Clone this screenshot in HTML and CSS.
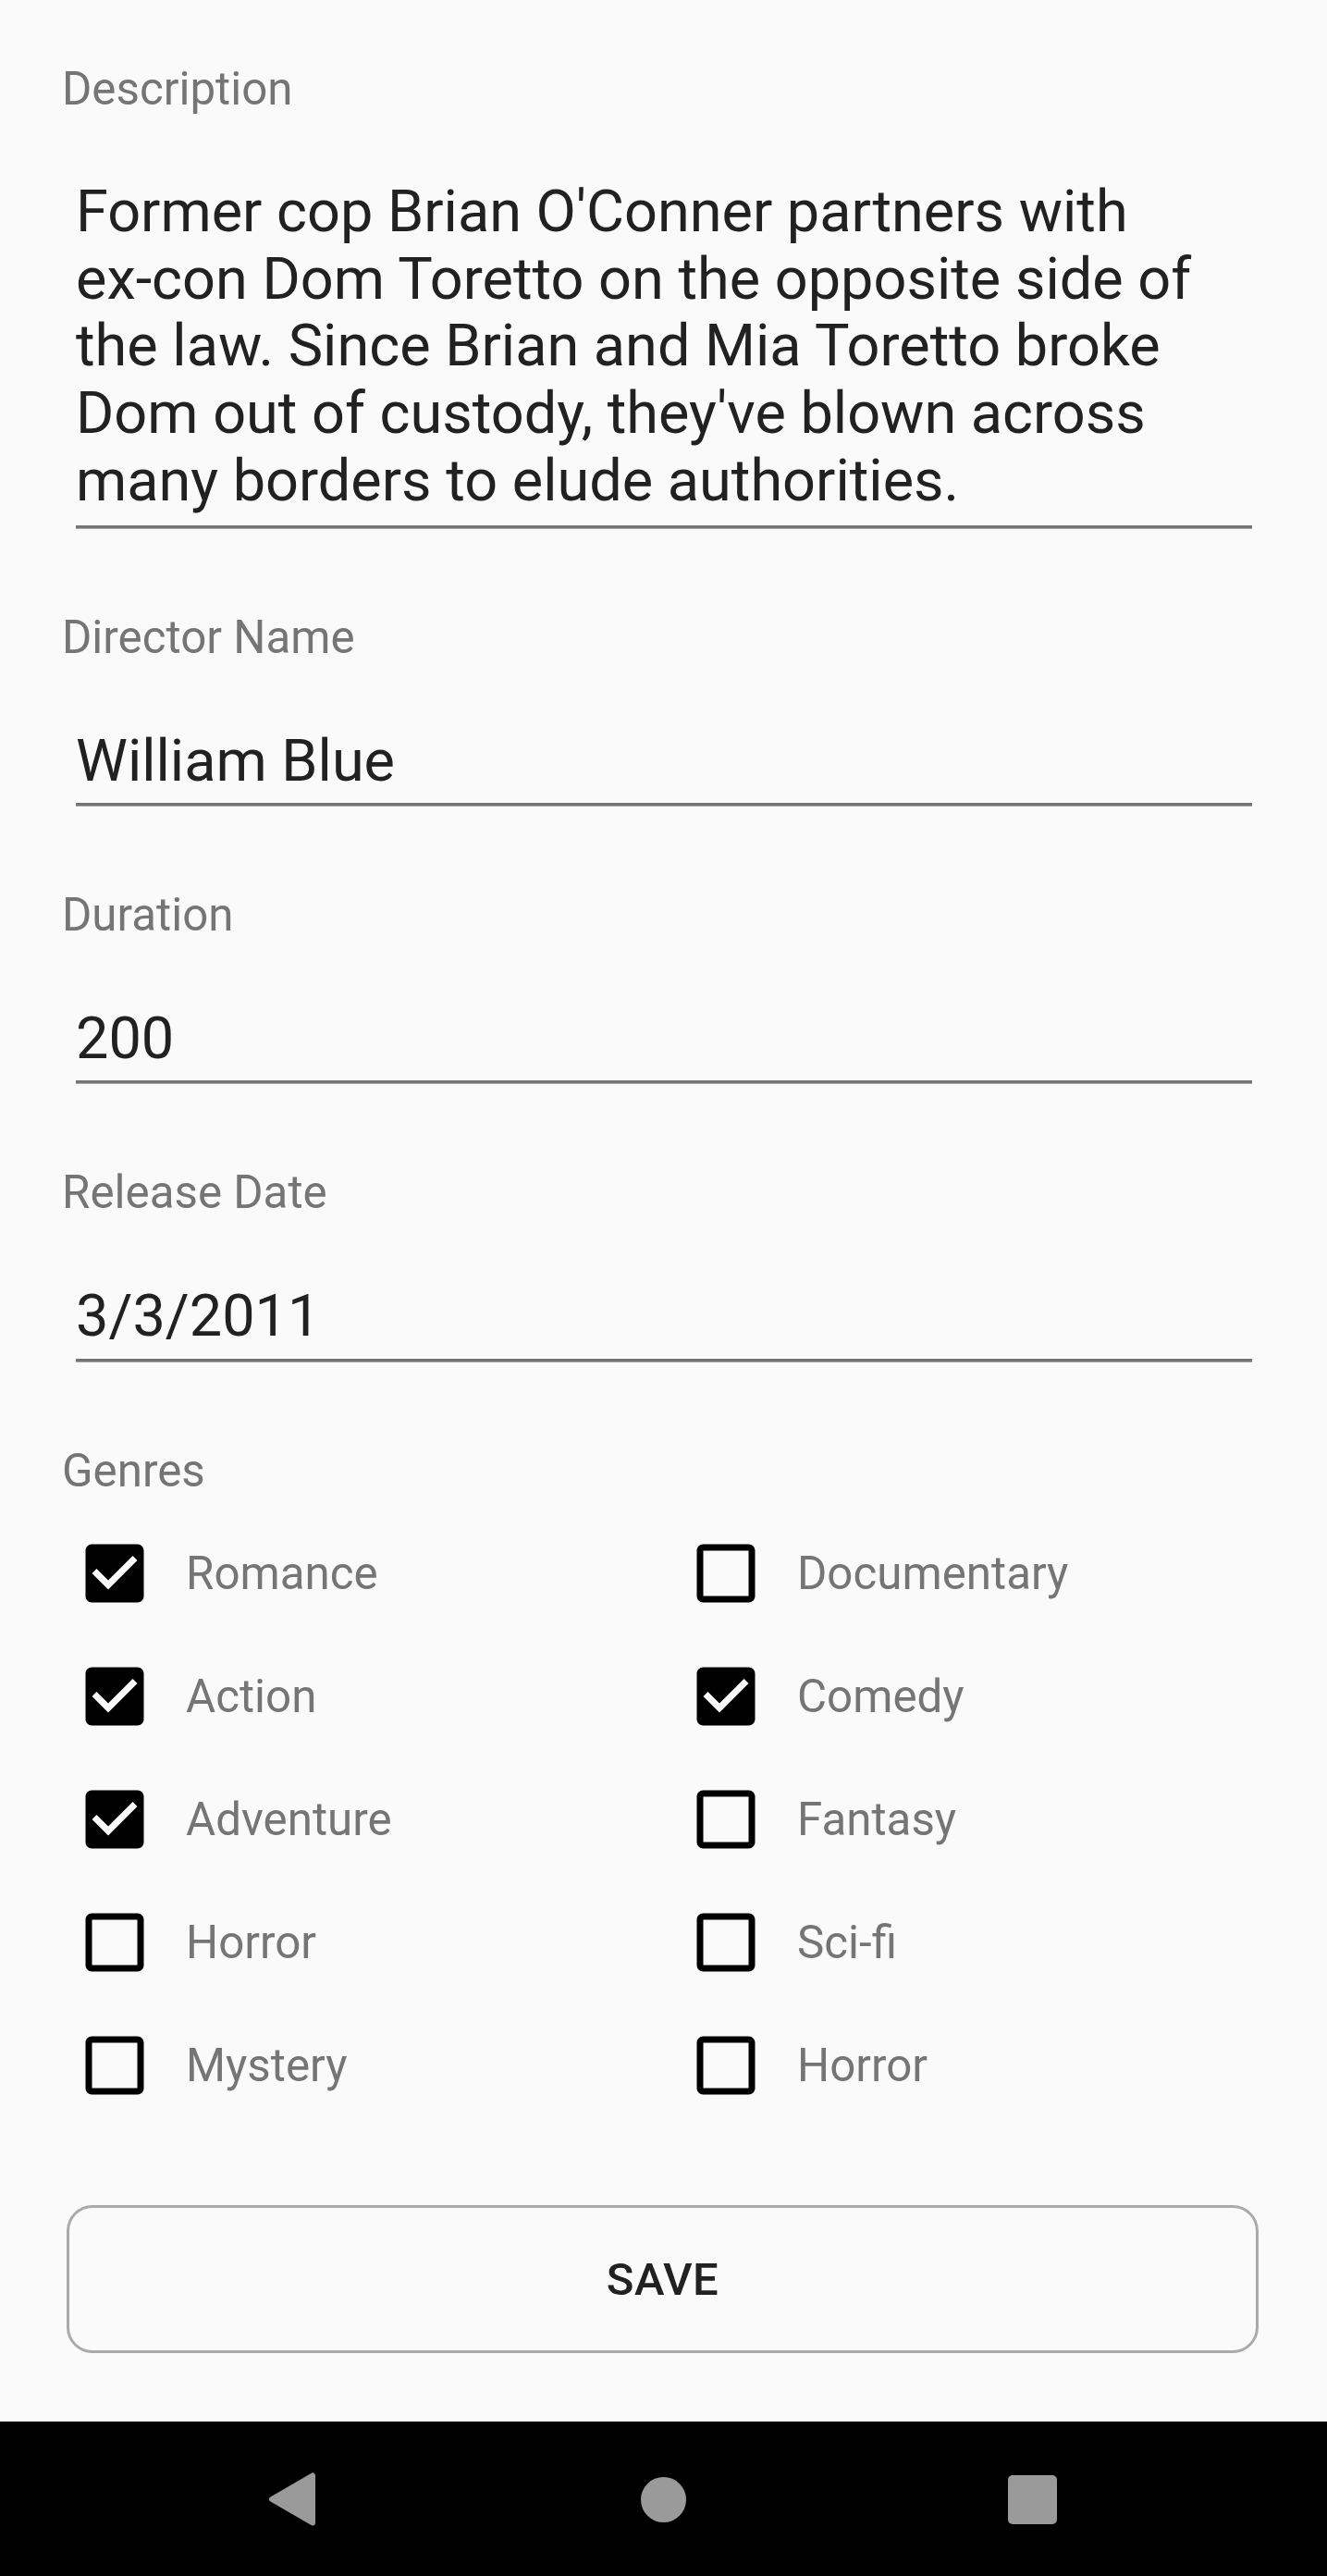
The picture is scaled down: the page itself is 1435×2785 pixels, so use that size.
FILE: index.html
```html
<!DOCTYPE html>
<html lang="en">
<head>
<meta charset="utf-8">
<title>Edit Movie</title>
<link rel="stylesheet" href="styles.css">
</head>
<body>
<main class="form">
  <section class="field first">
    <div class="label">Description</div>
    <div class="value multi">Former cop Brian O'Conner partners with<br>ex-con Dom Toretto on the opposite side of<br>the law. Since Brian and Mia Toretto broke<br>Dom out of custody, they've blown across<br>many borders to elude authorities.</div>
  </section>
  <section class="field">
    <div class="label">Director Name</div>
    <div class="value">William Blue</div>
  </section>
  <section class="field">
    <div class="label">Duration</div>
    <div class="value">200</div>
  </section>
  <section class="field">
    <div class="label">Release Date</div>
    <div class="value">3/3/2011</div>
  </section>
  <section class="field genres">
    <div class="label">Genres</div>
    <div class="grid">
      <label class="check"><svg class="box" viewBox="0 0 24 24"><path d="M19 3H5c-1.11 0-2 .9-2 2v14c0 1.1.89 2 2 2h14c1.11 0 2-.9 2-2V5c0-1.1-.89-2-2-2zm-9 14l-5-5 1.41-1.41L10 14.17l7.59-7.59L19 8l-9 9z"/></svg><span>Romance</span></label>
      <label class="check"><svg class="box" viewBox="0 0 24 24"><path d="M19 5v14H5V5h14m0-2H5c-1.1 0-2 .9-2 2v14c0 1.1.9 2 2 2h14c1.1 0 2-.9 2-2V5c0-1.1-.9-2-2-2z"/></svg><span>Documentary</span></label>
      <label class="check"><svg class="box" viewBox="0 0 24 24"><path d="M19 3H5c-1.11 0-2 .9-2 2v14c0 1.1.89 2 2 2h14c1.11 0 2-.9 2-2V5c0-1.1-.89-2-2-2zm-9 14l-5-5 1.41-1.41L10 14.17l7.59-7.59L19 8l-9 9z"/></svg><span>Action</span></label>
      <label class="check"><svg class="box" viewBox="0 0 24 24"><path d="M19 3H5c-1.11 0-2 .9-2 2v14c0 1.1.89 2 2 2h14c1.11 0 2-.9 2-2V5c0-1.1-.89-2-2-2zm-9 14l-5-5 1.41-1.41L10 14.17l7.59-7.59L19 8l-9 9z"/></svg><span>Comedy</span></label>
      <label class="check"><svg class="box" viewBox="0 0 24 24"><path d="M19 3H5c-1.11 0-2 .9-2 2v14c0 1.1.89 2 2 2h14c1.11 0 2-.9 2-2V5c0-1.1-.89-2-2-2zm-9 14l-5-5 1.41-1.41L10 14.17l7.59-7.59L19 8l-9 9z"/></svg><span>Adventure</span></label>
      <label class="check"><svg class="box" viewBox="0 0 24 24"><path d="M19 5v14H5V5h14m0-2H5c-1.1 0-2 .9-2 2v14c0 1.1.9 2 2 2h14c1.1 0 2-.9 2-2V5c0-1.1-.9-2-2-2z"/></svg><span>Fantasy</span></label>
      <label class="check"><svg class="box" viewBox="0 0 24 24"><path d="M19 5v14H5V5h14m0-2H5c-1.1 0-2 .9-2 2v14c0 1.1.9 2 2 2h14c1.1 0 2-.9 2-2V5c0-1.1-.9-2-2-2z"/></svg><span>Horror</span></label>
      <label class="check"><svg class="box" viewBox="0 0 24 24"><path d="M19 5v14H5V5h14m0-2H5c-1.1 0-2 .9-2 2v14c0 1.1.9 2 2 2h14c1.1 0 2-.9 2-2V5c0-1.1-.9-2-2-2z"/></svg><span>Sci-fi</span></label>
      <label class="check"><svg class="box" viewBox="0 0 24 24"><path d="M19 5v14H5V5h14m0-2H5c-1.1 0-2 .9-2 2v14c0 1.1.9 2 2 2h14c1.1 0 2-.9 2-2V5c0-1.1-.9-2-2-2z"/></svg><span>Mystery</span></label>
      <label class="check"><svg class="box" viewBox="0 0 24 24"><path d="M19 5v14H5V5h14m0-2H5c-1.1 0-2 .9-2 2v14c0 1.1.9 2 2 2h14c1.1 0 2-.9 2-2V5c0-1.1-.9-2-2-2z"/></svg><span>Horror</span></label>
    </div>
  </section>
  <div class="actions"><button class="save" type="button">SAVE</button></div>
</main>
<nav class="navbar">
  <div class="slot"><svg class="back" width="52" height="60" viewBox="0 0 52 60"><polygon points="4,30 48,4.5 48,55.5"/></svg></div>
  <div class="slot"><span class="home"></span></div>
  <div class="slot"><span class="recents"></span></div>
</nav>
</body>
</html>
```

FILE: styles.css
```css
html, body {
  margin: 0;
  padding: 0;
  background: #fafafa;
}

body {
  font-family: "Roboto", "Liberation Sans", sans-serif;
  width: 1435px;
}

.form {
  padding-top: 68px;
}

.field {
  margin-top: 90px;
}

.field.first {
  margin-top: 0;
}

.label {
  margin-left: 67px;
  font-size: 49.3px;
  line-height: 57px;
  color: #757575;
}

.value {
  margin: 68px 81px 0 82px;
  font-size: 63px;
  line-height: 73.2px;
  color: #212121;
  padding-bottom: 9px;
  border-bottom: 3px solid #747474;
  box-shadow: 0 1px 0 #a8a8a8;
}

.value.multi {
  margin-top: 67.8px;
  line-height: 72.7px;
  padding-bottom: 11.7px;
}

.genres .grid {
  margin: 15.5px 0 0 82px;
  display: grid;
  grid-template-columns: 661px 1fr;
}

.check {
  display: flex;
  align-items: center;
  height: 133px;
}

.box {
  width: 84px;
  height: 84px;
  flex: none;
  fill: #000;
}

.check span {
  margin-left: 35px;
  font-size: 49.3px;
  color: #757575;
}

.actions {
  margin: 85px 74px 0 72px;
}

.save {
  display: block;
  width: 100%;
  height: 160px;
  border: 3px solid #aaaaaa;
  border-radius: 28px;
  background: transparent;
  font-family: "Roboto", "Liberation Sans", sans-serif;
  font-weight: 500;
  font-size: 49px;
  letter-spacing: 0.5px;
  color: #212121;
  padding: 0;
}

.navbar {
  margin-top: 74px;
  height: 168px;
  background: #000;
  display: flex;
  justify-content: center;
  align-items: center;
}

.slot {
  width: 400px;
  display: flex;
  justify-content: center;
  align-items: center;
}

.back {
  fill: #9a9a9a;
  stroke: #9a9a9a;
  stroke-width: 6;
  stroke-linejoin: round;
  margin-left: -3px;
}

.home {
  width: 49px;
  height: 49px;
  border-radius: 50%;
  background: #9a9a9a;
}

.recents {
  width: 53px;
  height: 53px;
  border-radius: 5px;
  background: #9a9a9a;
  margin-left: -2px;
}
```
